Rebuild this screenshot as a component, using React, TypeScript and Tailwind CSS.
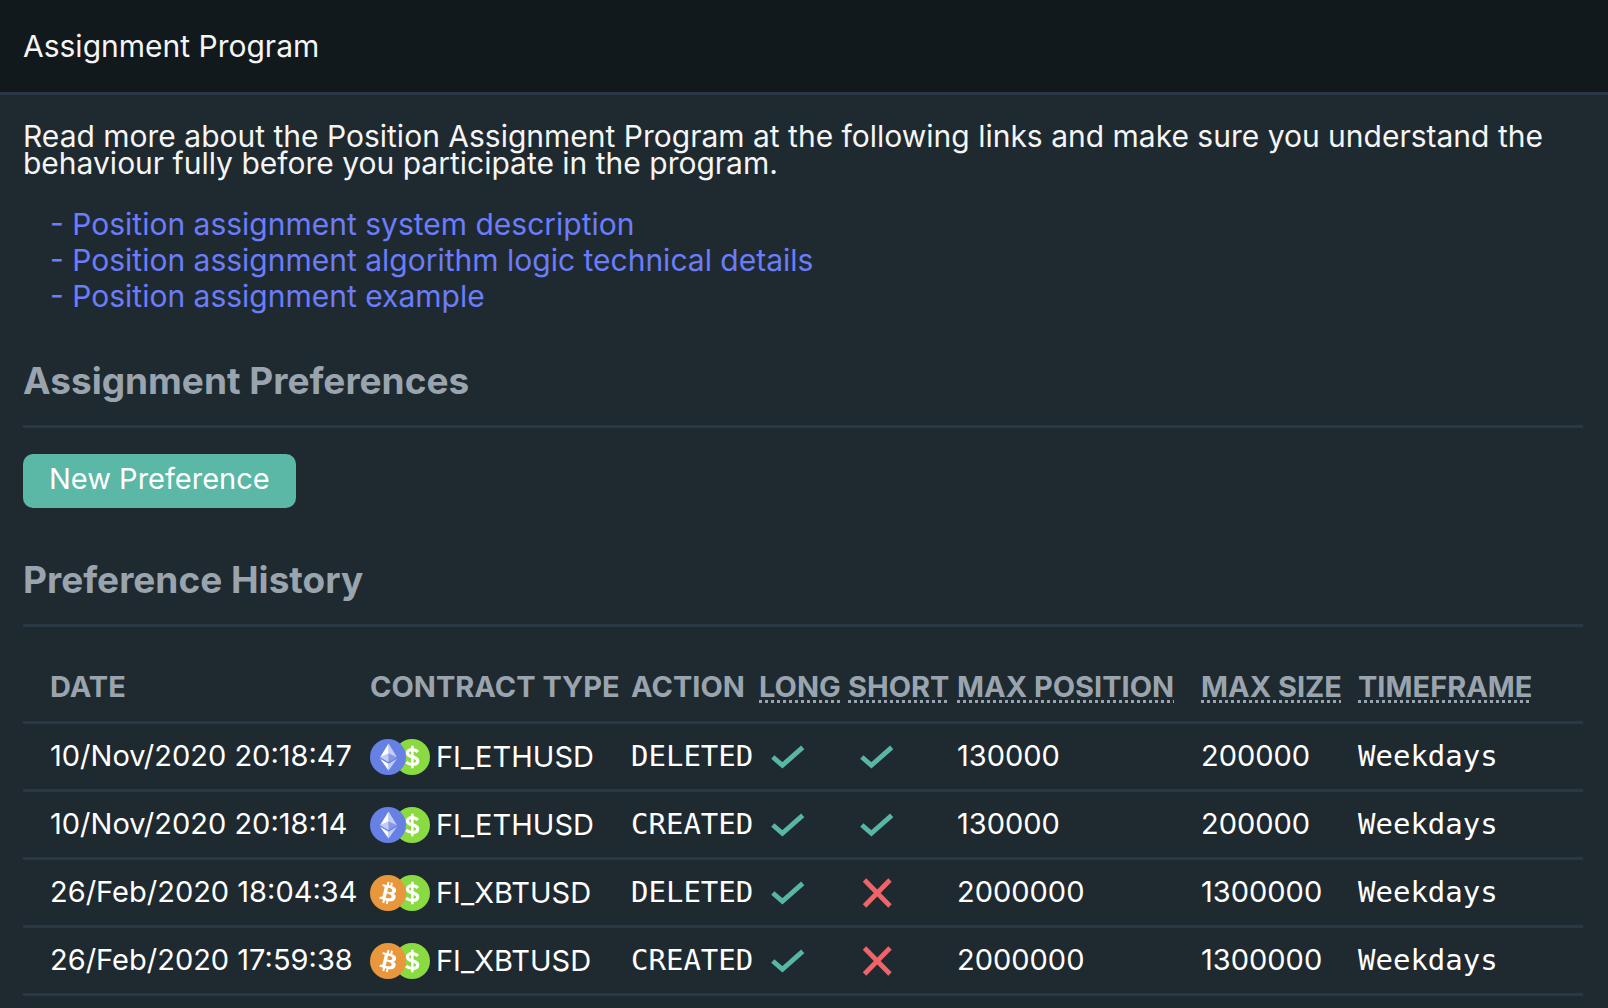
interface Preference {
  date: string
  base: 'eth' | 'btc'
  contract: string
  action: string
  long: boolean
  short: boolean
  maxPosition: string
  maxSize: string
  timeframe: string
}

const links = [
  'Position assignment system description',
  'Position assignment algorithm logic technical details',
  'Position assignment example',
]

const history: Preference[] = [
  { date: '10/Nov/2020 20:18:47', base: 'eth', contract: 'FI_ETHUSD', action: 'DELETED', long: true, short: true, maxPosition: '130000', maxSize: '200000', timeframe: 'Weekdays' },
  { date: '10/Nov/2020 20:18:14', base: 'eth', contract: 'FI_ETHUSD', action: 'CREATED', long: true, short: true, maxPosition: '130000', maxSize: '200000', timeframe: 'Weekdays' },
  { date: '26/Feb/2020 18:04:34', base: 'btc', contract: 'FI_XBTUSD', action: 'DELETED', long: true, short: false, maxPosition: '2000000', maxSize: '1300000', timeframe: 'Weekdays' },
  { date: '26/Feb/2020 17:59:38', base: 'btc', contract: 'FI_XBTUSD', action: 'CREATED', long: true, short: false, maxPosition: '2000000', maxSize: '1300000', timeframe: 'Weekdays' },
]

// hint: true marks the columns with a dotted underline
const columns = [
  { label: 'DATE', hint: false },
  { label: 'CONTRACT TYPE', hint: false },
  { label: 'ACTION', hint: false },
  { label: 'LONG', hint: true },
  { label: 'SHORT', hint: true },
  { label: 'MAX POSITION', hint: true },
  { label: 'MAX SIZE', hint: true },
  { label: 'TIMEFRAME', hint: true },
]

function EthIcon() {
  return (
    <svg viewBox="0 0 32 32" className="relative size-9" aria-hidden="true">
      <circle cx="16" cy="16" r="16" fill="#6780e3" />
      <g fill="#fff">
        <path fillOpacity=".602" d="M16.498 4v8.87l7.497 3.35z" />
        <path d="M16.498 4L9 16.22l7.498-3.35z" />
        <path fillOpacity=".602" d="M16.498 21.968v6.027L24 17.616z" />
        <path d="M16.498 27.995v-6.028L9 17.616z" />
        <path fillOpacity=".2" d="M16.498 20.573l7.497-4.353-7.497-3.348z" />
        <path fillOpacity=".602" d="M9 16.22l7.498 4.353v-7.701z" />
      </g>
    </svg>
  )
}

function BtcIcon() {
  return (
    <svg viewBox="0 0 32 32" className="relative size-9" aria-hidden="true">
      <circle cx="16" cy="16" r="16" fill="#e9973d" />
      <path
        fill="#fff"
        d="M23.189 14.02c.314-2.096-1.283-3.223-3.465-3.975l.708-2.84-1.728-.43-.69 2.765c-.454-.114-.92-.22-1.385-.326l.695-2.783L15.596 6l-.708 2.839c-.376-.086-.746-.17-1.104-.26l.002-.009-2.384-.595-.46 1.846s1.283.294 1.256.312c.7.175.826.638.805 1.006l-.806 3.235c.048.012.11.03.18.057l-.183-.045-1.13 4.532c-.086.212-.303.531-.793.41.018.025-1.256-.313-1.256-.313l-.858 1.978 2.25.561c.418.105.828.215 1.231.318l-.715 2.872 1.727.43.708-2.84c.472.127.93.245 1.378.357l-.706 2.828 1.728.43.715-2.866c2.948.558 5.164.333 6.097-2.333.752-2.146-.037-3.385-1.588-4.192 1.13-.26 1.98-1.003 2.207-2.538zm-3.95 5.538c-.533 2.147-4.148.986-5.32.695l.95-3.805c1.172.293 4.929.872 4.37 3.11zm.535-5.569c-.487 1.953-3.495.96-4.47.717l.86-3.45c.975.243 4.118.696 3.61 2.733z"
      />
    </svg>
  )
}

function UsdIcon() {
  return (
    <svg viewBox="0 0 32 32" className="-ml-3 size-9" aria-hidden="true">
      <circle cx="16" cy="16" r="16" fill="#8adb42" />
      <g fill="none" stroke="#fff">
        <path
          strokeWidth="2.8"
          d="M21.3 11.4c-1.3-1.2-3-2-5-2-2.7 0-4.4 1.2-4.4 3.1 0 4.4 9.2 2.4 9.2 6.9 0 2.1-1.9 3.3-4.6 3.3-2.3 0-4.2-.8-5.7-2.1"
        />
        <path strokeWidth="2.2" d="M16.3 6v20" />
      </g>
    </svg>
  )
}

function Mark({ on }: { on: boolean }) {
  return on ? (
    <svg viewBox="0 0 34 24" className="h-6 w-[34px]" role="img" aria-label="Yes">
      <path d="M1.8 12l9.6 8.4L31.7 2.4" fill="none" stroke="#58b6a4" strokeWidth="4.8" />
    </svg>
  ) : (
    <svg viewBox="0 0 34 30" className="h-[30px] w-[34px]" role="img" aria-label="No">
      <path d="M4.5 2L30 28M30 2L4.5 28" fill="none" stroke="#ef6469" strokeWidth="4.8" />
    </svg>
  )
}

function SectionTitle({ children }: { children: string }) {
  return (
    <h2 className="border-b-3 border-[#2a3744] pb-6 text-[37px] leading-10 font-bold text-[#9aa4ae]">
      {children}
    </h2>
  )
}

export default function App() {
  return (
    <div className="min-h-screen bg-[#1f2a30] font-[Inter,sans-serif] text-[30px] text-[#f5f5f5]">
      <header className="flex h-[95px] items-center border-b-3 border-[#2a3744] bg-[#11191c] px-[23px]">
        <h1 className="leading-9">Assignment Program</h1>
      </header>

      <main className="pt-7 pr-[25px] pl-[23px]">
        <p className="leading-[27px]">
          Read more about the Position Assignment Program at the following links and make sure you understand the
          behaviour fully before you participate in the program.
        </p>

        <ul className="mt-[29px] pl-[27px] leading-9 text-[#6b7dfb]">
          {links.map((link) => (
            <li key={link}>
              <a href="#" className="block w-fit">
                - {link}
              </a>
            </li>
          ))}
        </ul>

        <section className="mt-[47px]">
          <SectionTitle>Assignment Preferences</SectionTitle>
          <button
            type="button"
            className="mt-[26px] flex h-[54px] items-center rounded-[10px] bg-[#5bb7a6] px-[26px] pb-1 text-[29px] text-white"
          >
            New Preference
          </button>
        </section>

        <section className="mt-[52px]">
          <SectionTitle>Preference History</SectionTitle>
          <table className="w-full table-fixed border-separate border-spacing-0 text-left text-[29px] whitespace-nowrap text-white">
            <colgroup>
              <col className="w-[347px]" />
              <col className="w-[261px]" />
              <col className="w-[128px]" />
              <col className="w-[89px]" />
              <col className="w-[109px]" />
              <col className="w-[244px]" />
              <col className="w-[157px]" />
              <col />
            </colgroup>
            <thead>
              <tr className="leading-9 text-[#9aa4ae]">
                {columns.map((col) => (
                  <th key={col.label} className="border-b-3 border-[#2a3744] pt-[42px] pb-4 font-bold first:pl-[27px]">
                    <span className={col.hint ? 'underline decoration-dotted decoration-3 underline-offset-3' : ''}>
                      {col.label}
                    </span>
                  </th>
                ))}
              </tr>
            </thead>
            <tbody className="leading-9">
              {history.map((row) => (
                <tr key={row.date} className="*:h-[68px] *:border-b-3 *:border-[#2a3744]">
                  <td className="pb-0.5 pl-[27px]">{row.date}</td>
                  <td>
                    <div className="flex items-center">
                      {row.base === 'eth' ? <EthIcon /> : <BtcIcon />}
                      <UsdIcon />
                      <span className="ml-1.5">{row.contract}</span>
                    </div>
                  </td>
                  <td className="pb-0.5 font-['DejaVu_Sans_Mono',monospace]">{row.action}</td>
                  <td>
                    <div className="pl-3">
                      <Mark on={row.long} />
                    </div>
                  </td>
                  <td>
                    <div className="pl-3">
                      <Mark on={row.short} />
                    </div>
                  </td>
                  <td className="pb-0.5">{row.maxPosition}</td>
                  <td className="pb-0.5">{row.maxSize}</td>
                  <td className="pb-0.5 font-['DejaVu_Sans_Mono',monospace]">{row.timeframe}</td>
                </tr>
              ))}
            </tbody>
          </table>
        </section>
      </main>
    </div>
  )
}
